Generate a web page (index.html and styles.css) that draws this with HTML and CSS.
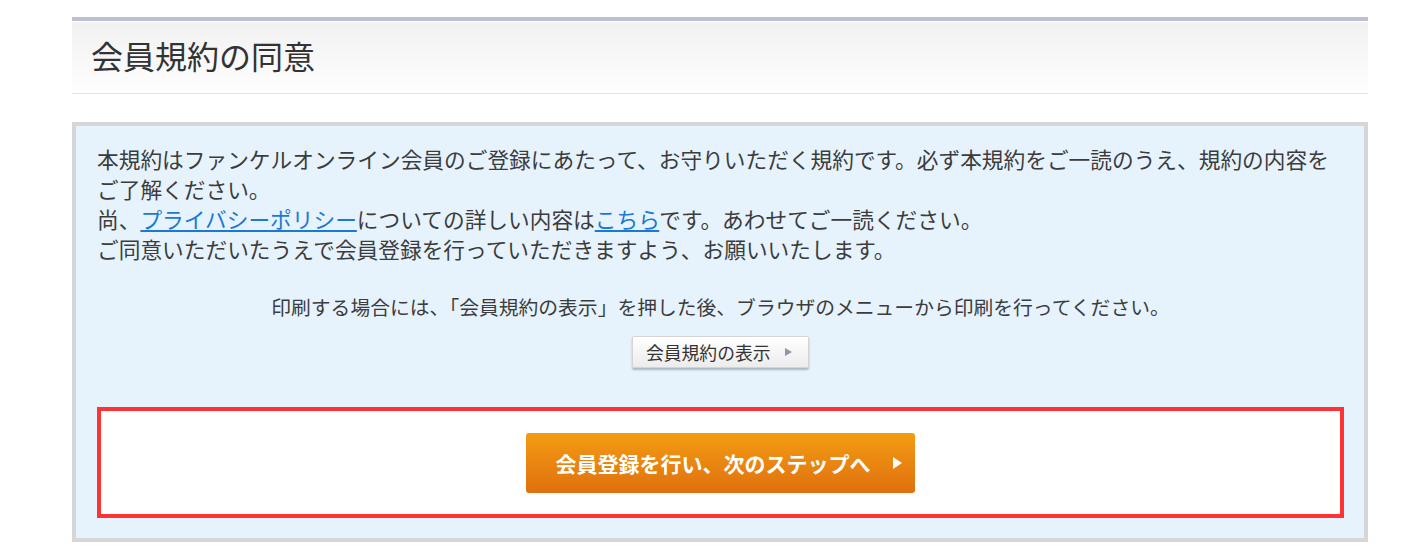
FILE: index.html
```html
<!DOCTYPE html>
<html lang="ja">
<head>
    <meta charset="UTF-8">
    <meta name="viewport" content="width=device-width, initial-scale=1.0">
    <title>会員規約の同意</title>
    <link rel="stylesheet" href="styles.css">
</head>
<body>
    <div class="page">
        <h1 class="page-title">会員規約の同意</h1>

        <div class="agree-box">
            <p class="lead">
                本規約はファンケルオンライン会員のご登録にあたって、お守りいただく規約です。必ず本規約をご一読のうえ、規約の内容をご了解ください。<br>
                尚、<a href="#">プライバシーポリシー</a>についての詳しい内容は<a href="#">こちら</a>です。あわせてご一読ください。<br>
                ご同意いただいたうえで会員登録を行っていただきますよう、お願いいたします。
            </p>

            <p class="print-note">印刷する場合には、「会員規約の表示」を押した後、ブラウザのメニューから印刷を行ってください。</p>
            <div class="center">
                <button class="btn-sub" type="button">会員規約の表示<span class="arrow"></span></button>
            </div>

            <div class="next-area">
                <button class="btn-next" type="button">会員登録を行い、次のステップへ<span class="arrow"></span></button>
            </div>
        </div>
    </div>
</body>
</html>
```

FILE: styles.css
```css
body {
    margin: 0;
    background-color: #fff;
    color: #333;
    font-family: "Noto Sans CJK JP", "Noto Sans", sans-serif;
}
.page {
    width: 1296px;
    margin-left: 72px;
    padding-top: 17px;
}
.page-title {
    margin: 0;
    height: 72px;
    padding-left: 19px;
    border-top: 4px solid #bcc1cf;
    border-bottom: 1px solid #e3e3e3;
    box-shadow: inset 0 1px 0 #fff;
    background: linear-gradient(#f1f1f1, #fefefe);
    font-size: 32px;
    font-weight: normal;
    line-height: 68px;
    color: #333;
}
.agree-box {
    margin-top: 28px;
    border: 4px solid #d6d6d6;
    background-color: #e6f3fc;
    padding: 18px 20px 20px 21px;
}
.lead {
    margin: 0;
    font-size: 21.7px;
    line-height: 30px;
    color: #3c3c3c;
}
.lead a {
    color: #1a78d6;
    text-decoration: underline;
}
.print-note {
    margin: 28px 0 0;
    text-align: center;
    font-size: 19.8px;
    line-height: 30px;
    color: #3c3c3c;
}
.center {
    text-align: center;
    margin-top: 14px;
}
.btn-sub {
    display: inline-flex;
    align-items: center;
    height: 32px;
    width: 177px;
    padding: 0 0 0 13px;
    border: 1px solid #d4d4d4;
    border-radius: 2px;
    background: linear-gradient(#fff, #ececec);
    box-shadow: 0 2px 2px rgba(0, 0, 0, 0.25);
    font-family: inherit;
    font-size: 17.8px;
    color: #333;
    cursor: pointer;
}
.btn-sub .arrow {
    width: 0;
    height: 0;
    margin-left: 15px;
    border-top: 4px solid transparent;
    border-bottom: 4px solid transparent;
    border-left: 7px solid #8e97a9;
}
.next-area {
    margin-top: 39px;
    border: 4px solid #ff3333;
    background-color: #fff;
    padding: 22px 0 21px;
    text-align: center;
}
.btn-next {
    display: inline-flex;
    align-items: center;
    justify-content: center;
    width: 389px;
    height: 60px;
    padding: 0 0 0 16px;
    border: none;
    border-radius: 3px;
    background: linear-gradient(#f39c12, #e0700f);
    font-family: inherit;
    font-size: 21px;
    font-weight: bold;
    color: #fff;
    cursor: pointer;
}
.btn-next .arrow {
    width: 0;
    height: 0;
    margin-left: 22px;
    border-top: 6px solid transparent;
    border-bottom: 6px solid transparent;
    border-left: 9px solid #fff;
}
```
